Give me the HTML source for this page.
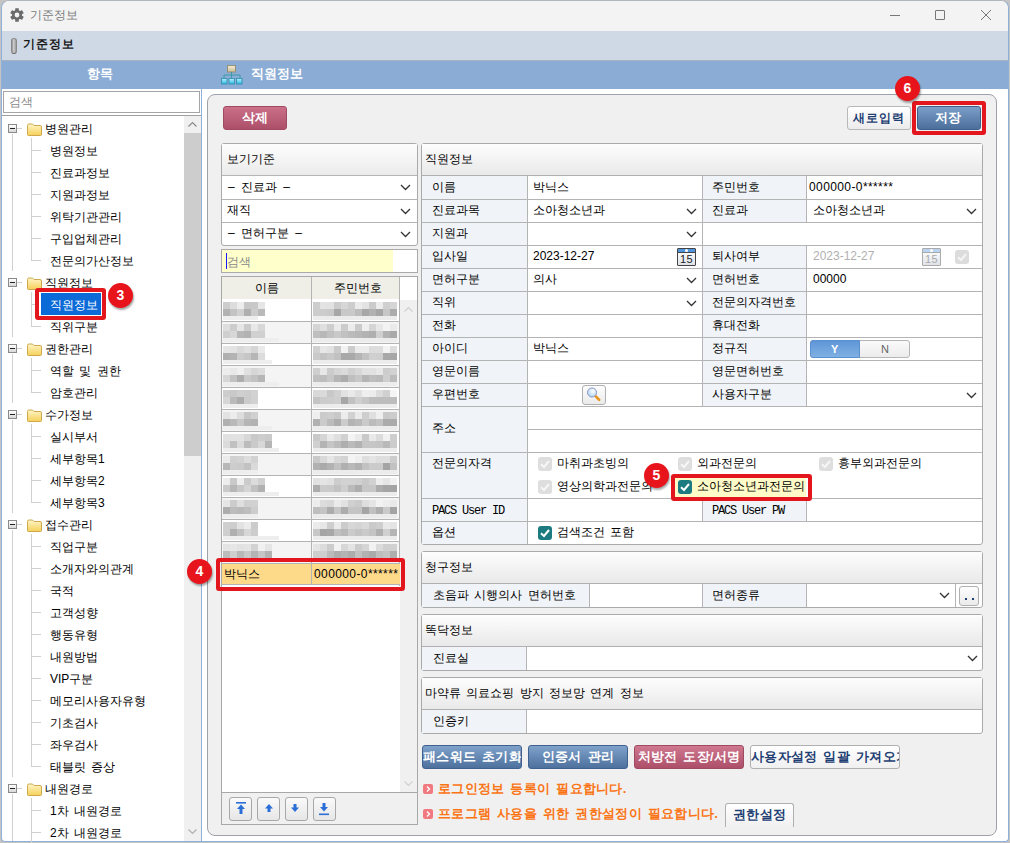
<!DOCTYPE html><html><head><meta charset="utf-8"><style>
*{box-sizing:border-box}
html,body{margin:0;padding:0;width:1010px;height:843px;overflow:hidden;background:#c4c4c4}
body{font-family:"Liberation Sans",sans-serif;font-size:12px;color:#000;position:relative;word-spacing:2px}
.t{position:absolute;white-space:nowrap}
.ab{position:absolute}
</style></head><body>
<div style="position:absolute;left:1008px;top:0px;width:2px;height:843px;background:#c4c4c4"></div>
<div style="position:absolute;left:1px;top:0px;width:1008px;height:842px;background:#fff;border:1px solid #8fb0d8;border-top-color:#b0b6be;border-radius:8px 8px 4px 4px;overflow:hidden"></div>
<div style="position:absolute;left:2px;top:1px;width:1006px;height:30px;background:#f3f3f3;border-radius:8px 8px 0 0"></div>
<svg class="ab" style="left:10px;top:8px" width="14" height="14" viewBox="0 0 14 14"><g fill="#6b6b6b"><circle cx="7" cy="7" r="5"/>
<rect x="5.2" y="0.2" width="3.6" height="13.6" rx="0.5"/><rect x="5.2" y="0.2" width="3.6" height="13.6" rx="0.5" transform="rotate(60 7 7)"/>
<rect x="5.2" y="0.2" width="3.6" height="13.6" rx="0.5" transform="rotate(120 7 7)"/></g>
<circle cx="7" cy="7" r="2.4" fill="#f3f3f3"/></svg>
<div class="t" style="left:30px;top:5px;line-height:20px;color:#7a7a7a">기준정보</div>
<div style="position:absolute;left:890px;top:15px;width:10px;height:1px;background:#777"></div>
<div style="position:absolute;left:935px;top:10px;width:10px;height:10px;border:1px solid #777;border-radius:1px"></div>
<svg class="ab" style="left:980px;top:9px" width="12" height="12" viewBox="0 0 12 12"><path d="M1 1L11 11M11 1L1 11" stroke="#777" stroke-width="1"/></svg>
<div style="position:absolute;left:2px;top:31px;width:1006px;height:30px;background:#cfd9e6;border-bottom:1px solid #a9b3bf"></div>
<div style="position:absolute;left:11px;top:38px;width:6px;height:16px;border-radius:3px;background:linear-gradient(90deg,#8a8a8a,#d0d0d0 40%,#9a9a9a);border:1px solid #8a8a8a;border-bottom-color:#666"></div>
<div class="t" style="left:23px;top:34px;line-height:20px;font-weight:bold;color:#1a1a1a;letter-spacing:1px">기준정보</div>
<div style="position:absolute;left:2px;top:61px;width:1006px;height:28px;background:#8badd5"></div>
<div class="t" style="left:87px;top:64px;line-height:20px;font-weight:bold;color:#fff;font-size:13px">항목</div>
<svg class="ab" style="left:220px;top:64px" width="25" height="22" viewBox="0 0 25 22">
<defs><linearGradient id="cy" x1="0" y1="0" x2="0" y2="1"><stop offset="0" stop-color="#b8f0ff"/><stop offset="1" stop-color="#2cb8e0"/></linearGradient>
<linearGradient id="bg1" x1="0" y1="0" x2="0" y2="1"><stop offset="0" stop-color="#f4ecd4"/><stop offset="1" stop-color="#c8bc98"/></linearGradient></defs>
<rect x="7.5" y="1.5" width="8" height="6.5" fill="url(#bg1)" stroke="#8c8468" stroke-width="0.8"/>
<path d="M11.5 8V11M4 14.5V11H20V14.5M11.5 11V14.5" stroke="#3a9aa8" fill="none" stroke-width="1"/>
<rect x="1.5" y="14.5" width="5.5" height="5.5" fill="url(#cy)" stroke="#2a8cac" stroke-width="0.8"/>
<rect x="9" y="14.5" width="5.5" height="5.5" fill="url(#cy)" stroke="#2a8cac" stroke-width="0.8"/>
<rect x="16.5" y="14.5" width="5.5" height="5.5" fill="url(#cy)" stroke="#2a8cac" stroke-width="0.8"/></svg>
<div class="t" style="left:251px;top:64px;line-height:20px;font-weight:bold;color:#fff;font-size:13px">직원정보</div>
<div style="position:absolute;left:201px;top:89px;width:1px;height:752px;background:#8fb0d8"></div>
<div style="position:absolute;left:3px;top:91px;width:197px;height:22px;border:1px solid #a5a5a5;background:#fff"></div>
<div class="t" style="left:9px;top:92px;line-height:20px;color:#888">검색</div>
<div style="position:absolute;left:2px;top:115px;width:199px;height:1px;background:#a0a0a0"></div>
<div style="position:absolute;left:184px;top:116px;width:17px;height:725px;background:#f0f0f0"></div>
<div style="position:absolute;left:184px;top:133px;width:17px;height:323px;background:#cdcdcd"></div>
<svg class="ab" style="left:187px;top:120px" width="11" height="8" viewBox="0 0 11 8"><path d="M1.5 6.5L5.5 2.5L9.5 6.5" stroke="#8a8a8a" fill="none" stroke-width="1.2"/></svg>
<svg class="ab" style="left:187px;top:828px" width="11" height="8" viewBox="0 0 11 8"><path d="M1.5 1.5L5.5 5.5L9.5 1.5" stroke="#b0b0b0" fill="none" stroke-width="1.2"/></svg>
<div style="position:absolute;left:12px;top:134px;width:1px;height:137px;background:#d0d0d0"></div>
<div style="position:absolute;left:12px;top:288px;width:1px;height:49px;background:#d0d0d0"></div>
<div style="position:absolute;left:12px;top:354px;width:1px;height:49px;background:#d0d0d0"></div>
<div style="position:absolute;left:12px;top:420px;width:1px;height:93px;background:#d0d0d0"></div>
<div style="position:absolute;left:12px;top:530px;width:1px;height:247px;background:#d0d0d0"></div>
<div style="position:absolute;left:12px;top:794px;width:1px;height:47px;background:#d0d0d0"></div>
<div style="position:absolute;left:8px;top:124px;width:9px;height:9px;border:1px solid #8a8a8a;background:linear-gradient(#fff,#d8d8d8)"></div>
<div style="position:absolute;left:10px;top:128px;width:5px;height:1px;background:#222"></div>
<div style="position:absolute;left:17px;top:128px;width:5px;height:1px;background:#d0d0d0"></div>
<svg class="ab" style="left:27px;top:123px" width="15" height="13" viewBox="0 0 15 13"><defs><linearGradient id="fg0" x1="0" y1="0" x2="0" y2="1"><stop offset="0" stop-color="#fff6c8"/><stop offset="1" stop-color="#f5cf58"/></linearGradient></defs><path d="M0.5 2.5Q0.5 1 2 1H5.5L7 2.5H13Q14.5 2.5 14.5 4V11.5Q14.5 12.5 13.5 12.5H1.5Q0.5 12.5 0.5 11.5Z" fill="url(#fg0)" stroke="#c8a040" stroke-width="0.9"/></svg>
<div class="t" style="left:45px;top:119px;line-height:20px;">병원관리</div>
<div style="position:absolute;left:31px;top:150px;width:10px;height:1px;background:#d0d0d0"></div>
<div class="t" style="left:50px;top:141px;line-height:20px;">병원정보</div>
<div style="position:absolute;left:31px;top:172px;width:10px;height:1px;background:#d0d0d0"></div>
<div class="t" style="left:50px;top:163px;line-height:20px;">진료과정보</div>
<div style="position:absolute;left:31px;top:194px;width:10px;height:1px;background:#d0d0d0"></div>
<div class="t" style="left:50px;top:185px;line-height:20px;">지원과정보</div>
<div style="position:absolute;left:31px;top:216px;width:10px;height:1px;background:#d0d0d0"></div>
<div class="t" style="left:50px;top:207px;line-height:20px;">위탁기관관리</div>
<div style="position:absolute;left:31px;top:238px;width:10px;height:1px;background:#d0d0d0"></div>
<div class="t" style="left:50px;top:229px;line-height:20px;">구입업체관리</div>
<div style="position:absolute;left:31px;top:260px;width:10px;height:1px;background:#d0d0d0"></div>
<div class="t" style="left:50px;top:251px;line-height:20px;">전문의가산정보</div>
<div style="position:absolute;left:8px;top:278px;width:9px;height:9px;border:1px solid #8a8a8a;background:linear-gradient(#fff,#d8d8d8)"></div>
<div style="position:absolute;left:10px;top:282px;width:5px;height:1px;background:#222"></div>
<div style="position:absolute;left:17px;top:282px;width:5px;height:1px;background:#d0d0d0"></div>
<svg class="ab" style="left:27px;top:277px" width="15" height="13" viewBox="0 0 15 13"><defs><linearGradient id="fg7" x1="0" y1="0" x2="0" y2="1"><stop offset="0" stop-color="#fff6c8"/><stop offset="1" stop-color="#f5cf58"/></linearGradient></defs><path d="M0.5 2.5Q0.5 1 2 1H5.5L7 2.5H13Q14.5 2.5 14.5 4V11.5Q14.5 12.5 13.5 12.5H1.5Q0.5 12.5 0.5 11.5Z" fill="url(#fg7)" stroke="#c8a040" stroke-width="0.9"/></svg>
<div class="t" style="left:45px;top:273px;line-height:20px;">직원정보</div>
<div style="position:absolute;left:31px;top:304px;width:10px;height:1px;background:#d0d0d0"></div>
<div style="position:absolute;left:35px;top:288px;width:71px;height:32px;border:4px solid #e3161d;border-radius:3px;background:#fff"></div>
<div style="position:absolute;left:41px;top:293px;width:60px;height:22px;background:#0a6ad8"></div>
<div class="t" style="left:50px;top:295px;line-height:20px;color:#fff">직원정보</div>
<div style="position:absolute;left:31px;top:326px;width:10px;height:1px;background:#d0d0d0"></div>
<div class="t" style="left:50px;top:317px;line-height:20px;">직위구분</div>
<div style="position:absolute;left:8px;top:344px;width:9px;height:9px;border:1px solid #8a8a8a;background:linear-gradient(#fff,#d8d8d8)"></div>
<div style="position:absolute;left:10px;top:348px;width:5px;height:1px;background:#222"></div>
<div style="position:absolute;left:17px;top:348px;width:5px;height:1px;background:#d0d0d0"></div>
<svg class="ab" style="left:27px;top:343px" width="15" height="13" viewBox="0 0 15 13"><defs><linearGradient id="fg10" x1="0" y1="0" x2="0" y2="1"><stop offset="0" stop-color="#fff6c8"/><stop offset="1" stop-color="#f5cf58"/></linearGradient></defs><path d="M0.5 2.5Q0.5 1 2 1H5.5L7 2.5H13Q14.5 2.5 14.5 4V11.5Q14.5 12.5 13.5 12.5H1.5Q0.5 12.5 0.5 11.5Z" fill="url(#fg10)" stroke="#c8a040" stroke-width="0.9"/></svg>
<div class="t" style="left:45px;top:339px;line-height:20px;">권한관리</div>
<div style="position:absolute;left:31px;top:370px;width:10px;height:1px;background:#d0d0d0"></div>
<div class="t" style="left:50px;top:361px;line-height:20px;">역할 및 권한</div>
<div style="position:absolute;left:31px;top:392px;width:10px;height:1px;background:#d0d0d0"></div>
<div class="t" style="left:50px;top:383px;line-height:20px;">암호관리</div>
<div style="position:absolute;left:8px;top:410px;width:9px;height:9px;border:1px solid #8a8a8a;background:linear-gradient(#fff,#d8d8d8)"></div>
<div style="position:absolute;left:10px;top:414px;width:5px;height:1px;background:#222"></div>
<div style="position:absolute;left:17px;top:414px;width:5px;height:1px;background:#d0d0d0"></div>
<svg class="ab" style="left:27px;top:409px" width="15" height="13" viewBox="0 0 15 13"><defs><linearGradient id="fg13" x1="0" y1="0" x2="0" y2="1"><stop offset="0" stop-color="#fff6c8"/><stop offset="1" stop-color="#f5cf58"/></linearGradient></defs><path d="M0.5 2.5Q0.5 1 2 1H5.5L7 2.5H13Q14.5 2.5 14.5 4V11.5Q14.5 12.5 13.5 12.5H1.5Q0.5 12.5 0.5 11.5Z" fill="url(#fg13)" stroke="#c8a040" stroke-width="0.9"/></svg>
<div class="t" style="left:45px;top:405px;line-height:20px;">수가정보</div>
<div style="position:absolute;left:31px;top:436px;width:10px;height:1px;background:#d0d0d0"></div>
<div class="t" style="left:50px;top:427px;line-height:20px;">실시부서</div>
<div style="position:absolute;left:31px;top:458px;width:10px;height:1px;background:#d0d0d0"></div>
<div class="t" style="left:50px;top:449px;line-height:20px;">세부항목1</div>
<div style="position:absolute;left:31px;top:480px;width:10px;height:1px;background:#d0d0d0"></div>
<div class="t" style="left:50px;top:471px;line-height:20px;">세부항목2</div>
<div style="position:absolute;left:31px;top:502px;width:10px;height:1px;background:#d0d0d0"></div>
<div class="t" style="left:50px;top:493px;line-height:20px;">세부항목3</div>
<div style="position:absolute;left:8px;top:520px;width:9px;height:9px;border:1px solid #8a8a8a;background:linear-gradient(#fff,#d8d8d8)"></div>
<div style="position:absolute;left:10px;top:524px;width:5px;height:1px;background:#222"></div>
<div style="position:absolute;left:17px;top:524px;width:5px;height:1px;background:#d0d0d0"></div>
<svg class="ab" style="left:27px;top:519px" width="15" height="13" viewBox="0 0 15 13"><defs><linearGradient id="fg18" x1="0" y1="0" x2="0" y2="1"><stop offset="0" stop-color="#fff6c8"/><stop offset="1" stop-color="#f5cf58"/></linearGradient></defs><path d="M0.5 2.5Q0.5 1 2 1H5.5L7 2.5H13Q14.5 2.5 14.5 4V11.5Q14.5 12.5 13.5 12.5H1.5Q0.5 12.5 0.5 11.5Z" fill="url(#fg18)" stroke="#c8a040" stroke-width="0.9"/></svg>
<div class="t" style="left:45px;top:515px;line-height:20px;">접수관리</div>
<div style="position:absolute;left:31px;top:546px;width:10px;height:1px;background:#d0d0d0"></div>
<div class="t" style="left:50px;top:537px;line-height:20px;">직업구분</div>
<div style="position:absolute;left:31px;top:568px;width:10px;height:1px;background:#d0d0d0"></div>
<div class="t" style="left:50px;top:559px;line-height:20px;">소개자와의관계</div>
<div style="position:absolute;left:31px;top:590px;width:10px;height:1px;background:#d0d0d0"></div>
<div class="t" style="left:50px;top:581px;line-height:20px;">국적</div>
<div style="position:absolute;left:31px;top:612px;width:10px;height:1px;background:#d0d0d0"></div>
<div class="t" style="left:50px;top:603px;line-height:20px;">고객성향</div>
<div style="position:absolute;left:31px;top:634px;width:10px;height:1px;background:#d0d0d0"></div>
<div class="t" style="left:50px;top:625px;line-height:20px;">행동유형</div>
<div style="position:absolute;left:31px;top:656px;width:10px;height:1px;background:#d0d0d0"></div>
<div class="t" style="left:50px;top:647px;line-height:20px;">내원방법</div>
<div style="position:absolute;left:31px;top:678px;width:10px;height:1px;background:#d0d0d0"></div>
<div class="t" style="left:50px;top:669px;line-height:20px;">VIP구분</div>
<div style="position:absolute;left:31px;top:700px;width:10px;height:1px;background:#d0d0d0"></div>
<div class="t" style="left:50px;top:691px;line-height:20px;">메모리사용자유형</div>
<div style="position:absolute;left:31px;top:722px;width:10px;height:1px;background:#d0d0d0"></div>
<div class="t" style="left:50px;top:713px;line-height:20px;">기초검사</div>
<div style="position:absolute;left:31px;top:744px;width:10px;height:1px;background:#d0d0d0"></div>
<div class="t" style="left:50px;top:735px;line-height:20px;">좌우검사</div>
<div style="position:absolute;left:31px;top:766px;width:10px;height:1px;background:#d0d0d0"></div>
<div class="t" style="left:50px;top:757px;line-height:20px;">태블릿 증상</div>
<div style="position:absolute;left:8px;top:784px;width:9px;height:9px;border:1px solid #8a8a8a;background:linear-gradient(#fff,#d8d8d8)"></div>
<div style="position:absolute;left:10px;top:788px;width:5px;height:1px;background:#222"></div>
<div style="position:absolute;left:17px;top:788px;width:5px;height:1px;background:#d0d0d0"></div>
<svg class="ab" style="left:27px;top:783px" width="15" height="13" viewBox="0 0 15 13"><defs><linearGradient id="fg30" x1="0" y1="0" x2="0" y2="1"><stop offset="0" stop-color="#fff6c8"/><stop offset="1" stop-color="#f5cf58"/></linearGradient></defs><path d="M0.5 2.5Q0.5 1 2 1H5.5L7 2.5H13Q14.5 2.5 14.5 4V11.5Q14.5 12.5 13.5 12.5H1.5Q0.5 12.5 0.5 11.5Z" fill="url(#fg30)" stroke="#c8a040" stroke-width="0.9"/></svg>
<div class="t" style="left:45px;top:779px;line-height:20px;">내원경로</div>
<div style="position:absolute;left:31px;top:810px;width:10px;height:1px;background:#d0d0d0"></div>
<div class="t" style="left:50px;top:801px;line-height:20px;">1차 내원경로</div>
<div style="position:absolute;left:31px;top:832px;width:10px;height:1px;background:#d0d0d0"></div>
<div class="t" style="left:50px;top:823px;line-height:20px;">2차 내원경로</div>
<div style="position:absolute;left:31px;top:138px;width:1px;height:123px;background:#d0d0d0"></div>
<div style="position:absolute;left:31px;top:292px;width:1px;height:35px;background:#d0d0d0"></div>
<div style="position:absolute;left:31px;top:358px;width:1px;height:35px;background:#d0d0d0"></div>
<div style="position:absolute;left:31px;top:424px;width:1px;height:79px;background:#d0d0d0"></div>
<div style="position:absolute;left:31px;top:534px;width:1px;height:233px;background:#d0d0d0"></div>
<div style="position:absolute;left:31px;top:798px;width:1px;height:45px;background:#d0d0d0"></div>
<div style="position:absolute;left:207px;top:94px;width:790px;height:742px;background:#f0f0f0;border:1px solid #9fa1a8;border-radius:8px"></div>
<div style="position:absolute;left:223px;top:106px;width:64px;height:24px;border-radius:3px;border:1px solid #a04a62;background:linear-gradient(#cb7088,#ad4f69)"></div>
<div class="t" style="left:242px;top:108px;line-height:20px;font-weight:bold;color:#fff;font-size:13px">삭제</div>
<div style="position:absolute;left:847px;top:106px;width:64px;height:24px;border-radius:3px;border:1px solid #b8b8b8;background:linear-gradient(#ffffff,#ececec)"></div>
<div class="t" style="left:853px;top:108px;line-height:20px;font-weight:bold;color:#1e3f73;letter-spacing:0.9px">새로입력</div>
<div style="position:absolute;left:912px;top:101px;width:74px;height:34px;border:4px solid #e3161d;border-radius:3px"></div>
<div style="position:absolute;left:917px;top:106px;width:64px;height:24px;border-radius:3px;border:1px solid #3d5f8a;background:linear-gradient(#7b9fc8,#4b6e9b)"></div>
<div class="t" style="left:935px;top:108px;line-height:20px;font-weight:bold;color:#fff;font-size:13px">저장</div>
<div style="position:absolute;left:221px;top:143px;width:197px;height:103px;border:1px solid #aaa;border-radius:3px;background:#fff;overflow:hidden"></div>
<div style="position:absolute;left:222px;top:144px;width:195px;height:32px;background:linear-gradient(#fdfdfd,#ebebeb);border-bottom:1px solid #b4b4b4"></div>
<div class="t" style="left:227px;top:149px;line-height:20px;">보기기준</div>
<div class="t" style="left:228px;top:177px;line-height:20px;word-spacing:3px">– 진료과 –</div>
<svg class="ab" style="left:400px;top:184px" width="11" height="7" viewBox="0 0 11 7"><path d="M1 1L5.5 5.5L10 1" stroke="#333" fill="none" stroke-width="1.3"/></svg>
<div style="position:absolute;left:222px;top:199px;width:195px;height:1px;background:#b4b4b4"></div>
<div class="t" style="left:227px;top:200px;line-height:20px;word-spacing:3px">재직</div>
<svg class="ab" style="left:400px;top:208px" width="11" height="7" viewBox="0 0 11 7"><path d="M1 1L5.5 5.5L10 1" stroke="#333" fill="none" stroke-width="1.3"/></svg>
<div style="position:absolute;left:222px;top:222px;width:195px;height:1px;background:#b4b4b4"></div>
<div class="t" style="left:228px;top:223px;line-height:20px;word-spacing:3px">– 면허구분 –</div>
<svg class="ab" style="left:400px;top:231px" width="11" height="7" viewBox="0 0 11 7"><path d="M1 1L5.5 5.5L10 1" stroke="#333" fill="none" stroke-width="1.3"/></svg>
<div style="position:absolute;left:221px;top:249px;width:197px;height:24px;border:1px solid #aaa;background:#fff"></div>
<div style="position:absolute;left:222px;top:250px;width:171px;height:22px;background:#ffffcc"></div>
<div style="position:absolute;left:226px;top:253px;width:1px;height:16px;background:#1a1aff"></div>
<div class="t" style="left:227px;top:252px;line-height:20px;color:#888">검색</div>
<div style="position:absolute;left:221px;top:276px;width:197px;height:549px;border:1px solid #a8a8a8;background:#fff"></div>
<div style="position:absolute;left:222px;top:277px;width:178px;height:23px;background:#efefe8;border-bottom:1px solid #b4b4b4"></div>
<div style="position:absolute;left:311px;top:277px;width:1px;height:308px;background:#b4b4b4"></div>
<div class="t" style="left:255px;top:278px;line-height:20px;">이름</div>
<div class="t" style="left:334px;top:278px;line-height:20px;">주민번호</div>
<div style="position:absolute;left:400px;top:300px;width:17px;height:492px;background:#f0f0f0"></div>
<svg class="ab" style="left:403px;top:305px" width="11" height="8" viewBox="0 0 11 8"><path d="M1.5 6.5L5.5 2.5L9.5 6.5" stroke="#d0d0d0" fill="none" stroke-width="1.2"/></svg>
<svg class="ab" style="left:403px;top:780px" width="11" height="8" viewBox="0 0 11 8"><path d="M1.5 1.5L5.5 5.5L9.5 1.5" stroke="#d0d0d0" fill="none" stroke-width="1.2"/></svg>
<svg class="ab" style="left:222px;top:276px" width="178" height="290"><rect x="0" y="23" width="178" height="22" fill="#ffffff"/><rect x="1" y="26" width="7" height="7" fill="#cdcdcd"/><rect x="8" y="26" width="7" height="7" fill="#dddddd"/><rect x="15" y="26" width="7" height="7" fill="#ededed"/><rect x="22" y="26" width="7" height="7" fill="#c7c7c7"/><rect x="29" y="26" width="7" height="7" fill="#c8c8c8"/><rect x="36" y="26" width="7" height="7" fill="#e6e6e6"/><rect x="1" y="33" width="7" height="7" fill="#b2b2b2"/><rect x="8" y="33" width="7" height="7" fill="#c3c3c3"/><rect x="15" y="33" width="7" height="7" fill="#d1d1d1"/><rect x="22" y="33" width="7" height="7" fill="#afafaf"/><rect x="29" y="33" width="7" height="7" fill="#cccccc"/><rect x="36" y="33" width="7" height="7" fill="#b9b9b9"/><rect x="1" y="40" width="35" height="4" fill="#eeeeee"/><rect x="91" y="26" width="7" height="7" fill="#cdcdcd"/><rect x="98" y="26" width="7" height="7" fill="#e3e3e3"/><rect x="105" y="26" width="7" height="7" fill="#e2e2e2"/><rect x="112" y="26" width="7" height="7" fill="#cccccc"/><rect x="119" y="26" width="7" height="7" fill="#d7d7d7"/><rect x="126" y="26" width="7" height="7" fill="#cdcdcd"/><rect x="133" y="26" width="7" height="7" fill="#ebebeb"/><rect x="140" y="26" width="7" height="7" fill="#e3e3e3"/><rect x="147" y="26" width="7" height="7" fill="#cbcbcb"/><rect x="154" y="26" width="7" height="7" fill="#ececec"/><rect x="161" y="26" width="7" height="7" fill="#cfcfcf"/><rect x="168" y="26" width="7" height="7" fill="#d6d6d6"/><rect x="91" y="33" width="7" height="7" fill="#cccccc"/><rect x="98" y="33" width="7" height="7" fill="#cccccc"/><rect x="105" y="33" width="7" height="7" fill="#c9c9c9"/><rect x="112" y="33" width="7" height="7" fill="#a7a7a7"/><rect x="119" y="33" width="7" height="7" fill="#c8c8c8"/><rect x="126" y="33" width="7" height="7" fill="#c9c9c9"/><rect x="133" y="33" width="7" height="7" fill="#bdbdbd"/><rect x="140" y="33" width="7" height="7" fill="#a7a7a7"/><rect x="147" y="33" width="7" height="7" fill="#b2b2b2"/><rect x="154" y="33" width="7" height="7" fill="#a6a6a6"/><rect x="161" y="33" width="7" height="7" fill="#c7c7c7"/><rect x="168" y="33" width="7" height="7" fill="#acacac"/><rect x="91" y="40" width="84" height="4" fill="#ececec"/><rect x="0" y="45" width="178" height="22" fill="#f4f4f4"/><rect x="1" y="48" width="7" height="7" fill="#dedede"/><rect x="8" y="48" width="7" height="7" fill="#cdcdcd"/><rect x="15" y="48" width="7" height="7" fill="#e6e6e6"/><rect x="22" y="48" width="7" height="7" fill="#cbcbcb"/><rect x="29" y="48" width="7" height="7" fill="#e8e8e8"/><rect x="36" y="48" width="7" height="7" fill="#d7d7d7"/><rect x="1" y="55" width="7" height="7" fill="#cfcfcf"/><rect x="8" y="55" width="7" height="7" fill="#d7d7d7"/><rect x="15" y="55" width="7" height="7" fill="#b7b7b7"/><rect x="22" y="55" width="7" height="7" fill="#b2b2b2"/><rect x="29" y="55" width="7" height="7" fill="#d1d1d1"/><rect x="36" y="55" width="7" height="7" fill="#d0d0d0"/><rect x="1" y="62" width="56" height="4" fill="#eeeeee"/><rect x="91" y="48" width="7" height="7" fill="#d4d4d4"/><rect x="98" y="48" width="7" height="7" fill="#dfdfdf"/><rect x="105" y="48" width="7" height="7" fill="#cecece"/><rect x="112" y="48" width="7" height="7" fill="#ebebeb"/><rect x="119" y="48" width="7" height="7" fill="#cccccc"/><rect x="126" y="48" width="7" height="7" fill="#ececec"/><rect x="133" y="48" width="7" height="7" fill="#cbcbcb"/><rect x="140" y="48" width="7" height="7" fill="#efefef"/><rect x="147" y="48" width="7" height="7" fill="#d5d5d5"/><rect x="154" y="48" width="7" height="7" fill="#e7e7e7"/><rect x="161" y="48" width="7" height="7" fill="#f3f3f3"/><rect x="168" y="48" width="7" height="7" fill="#eaeaea"/><rect x="91" y="55" width="7" height="7" fill="#bfbfbf"/><rect x="98" y="55" width="7" height="7" fill="#b8b8b8"/><rect x="105" y="55" width="7" height="7" fill="#c1c1c1"/><rect x="112" y="55" width="7" height="7" fill="#c9c9c9"/><rect x="119" y="55" width="7" height="7" fill="#c1c1c1"/><rect x="126" y="55" width="7" height="7" fill="#bbbbbb"/><rect x="133" y="55" width="7" height="7" fill="#b7b7b7"/><rect x="140" y="55" width="7" height="7" fill="#b3b3b3"/><rect x="147" y="55" width="7" height="7" fill="#afafaf"/><rect x="154" y="55" width="7" height="7" fill="#d0d0d0"/><rect x="161" y="55" width="7" height="7" fill="#b3b3b3"/><rect x="168" y="55" width="7" height="7" fill="#a9a9a9"/><rect x="91" y="62" width="84" height="4" fill="#ececec"/><rect x="0" y="67" width="178" height="22" fill="#ffffff"/><rect x="1" y="70" width="7" height="7" fill="#e5e5e5"/><rect x="8" y="70" width="7" height="7" fill="#e3e3e3"/><rect x="15" y="70" width="7" height="7" fill="#d9d9d9"/><rect x="22" y="70" width="7" height="7" fill="#e0e0e0"/><rect x="29" y="70" width="7" height="7" fill="#d6d6d6"/><rect x="36" y="70" width="7" height="7" fill="#eaeaea"/><rect x="1" y="77" width="7" height="7" fill="#b0b0b0"/><rect x="8" y="77" width="7" height="7" fill="#b3b3b3"/><rect x="15" y="77" width="7" height="7" fill="#cccccc"/><rect x="22" y="77" width="7" height="7" fill="#c6c6c6"/><rect x="29" y="77" width="7" height="7" fill="#b6b6b6"/><rect x="36" y="77" width="7" height="7" fill="#dcdcdc"/><rect x="1" y="84" width="49" height="4" fill="#eeeeee"/><rect x="91" y="70" width="7" height="7" fill="#d1d1d1"/><rect x="98" y="70" width="7" height="7" fill="#e7e7e7"/><rect x="105" y="70" width="7" height="7" fill="#e2e2e2"/><rect x="112" y="70" width="7" height="7" fill="#cacaca"/><rect x="119" y="70" width="7" height="7" fill="#f2f2f2"/><rect x="126" y="70" width="7" height="7" fill="#cccccc"/><rect x="133" y="70" width="7" height="7" fill="#ebebeb"/><rect x="140" y="70" width="7" height="7" fill="#ececec"/><rect x="147" y="70" width="7" height="7" fill="#dcdcdc"/><rect x="154" y="70" width="7" height="7" fill="#dddddd"/><rect x="161" y="70" width="7" height="7" fill="#f4f4f4"/><rect x="168" y="70" width="7" height="7" fill="#dedede"/><rect x="91" y="77" width="7" height="7" fill="#cacaca"/><rect x="98" y="77" width="7" height="7" fill="#c3c3c3"/><rect x="105" y="77" width="7" height="7" fill="#c9c9c9"/><rect x="112" y="77" width="7" height="7" fill="#c1c1c1"/><rect x="119" y="77" width="7" height="7" fill="#a8a8a8"/><rect x="126" y="77" width="7" height="7" fill="#a9a9a9"/><rect x="133" y="77" width="7" height="7" fill="#b5b5b5"/><rect x="140" y="77" width="7" height="7" fill="#c2c2c2"/><rect x="147" y="77" width="7" height="7" fill="#d0d0d0"/><rect x="154" y="77" width="7" height="7" fill="#cecece"/><rect x="161" y="77" width="7" height="7" fill="#a8a8a8"/><rect x="168" y="77" width="7" height="7" fill="#a7a7a7"/><rect x="91" y="84" width="84" height="4" fill="#ececec"/><rect x="0" y="89" width="178" height="22" fill="#f4f4f4"/><rect x="1" y="92" width="7" height="7" fill="#ededed"/><rect x="8" y="92" width="7" height="7" fill="#e8e8e8"/><rect x="15" y="92" width="7" height="7" fill="#efefef"/><rect x="22" y="92" width="7" height="7" fill="#e0e0e0"/><rect x="29" y="92" width="7" height="7" fill="#d6d6d6"/><rect x="36" y="92" width="7" height="7" fill="#dcdcdc"/><rect x="1" y="99" width="7" height="7" fill="#d6d6d6"/><rect x="8" y="99" width="7" height="7" fill="#c2c2c2"/><rect x="15" y="99" width="7" height="7" fill="#adadad"/><rect x="22" y="99" width="7" height="7" fill="#c9c9c9"/><rect x="29" y="99" width="7" height="7" fill="#c2c2c2"/><rect x="36" y="99" width="7" height="7" fill="#b6b6b6"/><rect x="1" y="106" width="56" height="4" fill="#eeeeee"/><rect x="91" y="92" width="7" height="7" fill="#cfcfcf"/><rect x="98" y="92" width="7" height="7" fill="#e7e7e7"/><rect x="105" y="92" width="7" height="7" fill="#cbcbcb"/><rect x="112" y="92" width="7" height="7" fill="#d5d5d5"/><rect x="119" y="92" width="7" height="7" fill="#dadada"/><rect x="126" y="92" width="7" height="7" fill="#d0d0d0"/><rect x="133" y="92" width="7" height="7" fill="#d7d7d7"/><rect x="140" y="92" width="7" height="7" fill="#e1e1e1"/><rect x="147" y="92" width="7" height="7" fill="#e1e1e1"/><rect x="154" y="92" width="7" height="7" fill="#e7e7e7"/><rect x="161" y="92" width="7" height="7" fill="#cdcdcd"/><rect x="168" y="92" width="7" height="7" fill="#d2d2d2"/><rect x="91" y="99" width="7" height="7" fill="#c0c0c0"/><rect x="98" y="99" width="7" height="7" fill="#bdbdbd"/><rect x="105" y="99" width="7" height="7" fill="#c7c7c7"/><rect x="112" y="99" width="7" height="7" fill="#b5b5b5"/><rect x="119" y="99" width="7" height="7" fill="#acacac"/><rect x="126" y="99" width="7" height="7" fill="#bfbfbf"/><rect x="133" y="99" width="7" height="7" fill="#c7c7c7"/><rect x="140" y="99" width="7" height="7" fill="#b5b5b5"/><rect x="147" y="99" width="7" height="7" fill="#bebebe"/><rect x="154" y="99" width="7" height="7" fill="#bababa"/><rect x="161" y="99" width="7" height="7" fill="#cfcfcf"/><rect x="168" y="99" width="7" height="7" fill="#bcbcbc"/><rect x="91" y="106" width="84" height="4" fill="#ececec"/><rect x="0" y="111" width="178" height="22" fill="#ffffff"/><rect x="1" y="114" width="7" height="7" fill="#cdcdcd"/><rect x="8" y="114" width="7" height="7" fill="#c9c9c9"/><rect x="15" y="114" width="7" height="7" fill="#cfcfcf"/><rect x="22" y="114" width="7" height="7" fill="#cdcdcd"/><rect x="29" y="114" width="7" height="7" fill="#d2d2d2"/><rect x="1" y="121" width="7" height="7" fill="#d6d6d6"/><rect x="8" y="121" width="7" height="7" fill="#bababa"/><rect x="15" y="121" width="7" height="7" fill="#acacac"/><rect x="22" y="121" width="7" height="7" fill="#cbcbcb"/><rect x="29" y="121" width="7" height="7" fill="#d1d1d1"/><rect x="1" y="128" width="35" height="4" fill="#eeeeee"/><rect x="91" y="114" width="7" height="7" fill="#d8d8d8"/><rect x="98" y="114" width="7" height="7" fill="#dadada"/><rect x="105" y="114" width="7" height="7" fill="#c8c8c8"/><rect x="112" y="114" width="7" height="7" fill="#d1d1d1"/><rect x="119" y="114" width="7" height="7" fill="#e2e2e2"/><rect x="126" y="114" width="7" height="7" fill="#eaeaea"/><rect x="133" y="114" width="7" height="7" fill="#dfdfdf"/><rect x="140" y="114" width="7" height="7" fill="#efefef"/><rect x="147" y="114" width="7" height="7" fill="#ececec"/><rect x="154" y="114" width="7" height="7" fill="#dcdcdc"/><rect x="161" y="114" width="7" height="7" fill="#d0d0d0"/><rect x="168" y="114" width="7" height="7" fill="#f4f4f4"/><rect x="91" y="121" width="7" height="7" fill="#c4c4c4"/><rect x="98" y="121" width="7" height="7" fill="#cbcbcb"/><rect x="105" y="121" width="7" height="7" fill="#cdcdcd"/><rect x="112" y="121" width="7" height="7" fill="#cfcfcf"/><rect x="119" y="121" width="7" height="7" fill="#a7a7a7"/><rect x="126" y="121" width="7" height="7" fill="#c1c1c1"/><rect x="133" y="121" width="7" height="7" fill="#cfcfcf"/><rect x="140" y="121" width="7" height="7" fill="#c7c7c7"/><rect x="147" y="121" width="7" height="7" fill="#bdbdbd"/><rect x="154" y="121" width="7" height="7" fill="#bdbdbd"/><rect x="161" y="121" width="7" height="7" fill="#bdbdbd"/><rect x="168" y="121" width="7" height="7" fill="#bdbdbd"/><rect x="91" y="128" width="84" height="4" fill="#ececec"/><rect x="0" y="133" width="178" height="22" fill="#f4f4f4"/><rect x="1" y="136" width="7" height="7" fill="#e2e2e2"/><rect x="8" y="136" width="7" height="7" fill="#ececec"/><rect x="15" y="136" width="7" height="7" fill="#dddddd"/><rect x="22" y="136" width="7" height="7" fill="#c7c7c7"/><rect x="29" y="136" width="7" height="7" fill="#d0d0d0"/><rect x="1" y="143" width="7" height="7" fill="#b0b0b0"/><rect x="8" y="143" width="7" height="7" fill="#b9b9b9"/><rect x="15" y="143" width="7" height="7" fill="#c8c8c8"/><rect x="22" y="143" width="7" height="7" fill="#b6b6b6"/><rect x="29" y="143" width="7" height="7" fill="#b3b3b3"/><rect x="1" y="150" width="49" height="4" fill="#eeeeee"/><rect x="91" y="136" width="7" height="7" fill="#eeeeee"/><rect x="98" y="136" width="7" height="7" fill="#cbcbcb"/><rect x="105" y="136" width="7" height="7" fill="#cecece"/><rect x="112" y="136" width="7" height="7" fill="#c8c8c8"/><rect x="119" y="136" width="7" height="7" fill="#ececec"/><rect x="126" y="136" width="7" height="7" fill="#d1d1d1"/><rect x="133" y="136" width="7" height="7" fill="#eaeaea"/><rect x="140" y="136" width="7" height="7" fill="#cecece"/><rect x="147" y="136" width="7" height="7" fill="#dfdfdf"/><rect x="154" y="136" width="7" height="7" fill="#efefef"/><rect x="161" y="136" width="7" height="7" fill="#c9c9c9"/><rect x="168" y="136" width="7" height="7" fill="#cccccc"/><rect x="91" y="143" width="7" height="7" fill="#b1b1b1"/><rect x="98" y="143" width="7" height="7" fill="#cbcbcb"/><rect x="105" y="143" width="7" height="7" fill="#bcbcbc"/><rect x="112" y="143" width="7" height="7" fill="#adadad"/><rect x="119" y="143" width="7" height="7" fill="#cccccc"/><rect x="126" y="143" width="7" height="7" fill="#b4b4b4"/><rect x="133" y="143" width="7" height="7" fill="#bababa"/><rect x="140" y="143" width="7" height="7" fill="#cacaca"/><rect x="147" y="143" width="7" height="7" fill="#bbbbbb"/><rect x="154" y="143" width="7" height="7" fill="#c2c2c2"/><rect x="161" y="143" width="7" height="7" fill="#ababab"/><rect x="168" y="143" width="7" height="7" fill="#ababab"/><rect x="91" y="150" width="84" height="4" fill="#ececec"/><rect x="0" y="155" width="178" height="22" fill="#ffffff"/><rect x="1" y="158" width="7" height="7" fill="#e1e1e1"/><rect x="8" y="158" width="7" height="7" fill="#e2e2e2"/><rect x="15" y="158" width="7" height="7" fill="#e2e2e2"/><rect x="22" y="158" width="7" height="7" fill="#d7d7d7"/><rect x="29" y="158" width="7" height="7" fill="#c9c9c9"/><rect x="36" y="158" width="7" height="7" fill="#cdcdcd"/><rect x="43" y="158" width="7" height="7" fill="#cacaca"/><rect x="1" y="165" width="7" height="7" fill="#dbdbdb"/><rect x="8" y="165" width="7" height="7" fill="#c1c1c1"/><rect x="15" y="165" width="7" height="7" fill="#dbdbdb"/><rect x="22" y="165" width="7" height="7" fill="#bcbcbc"/><rect x="29" y="165" width="7" height="7" fill="#cacaca"/><rect x="36" y="165" width="7" height="7" fill="#d8d8d8"/><rect x="43" y="165" width="7" height="7" fill="#b6b6b6"/><rect x="1" y="172" width="56" height="4" fill="#eeeeee"/><rect x="91" y="158" width="7" height="7" fill="#c9c9c9"/><rect x="98" y="158" width="7" height="7" fill="#d5d5d5"/><rect x="105" y="158" width="7" height="7" fill="#e9e9e9"/><rect x="112" y="158" width="7" height="7" fill="#dfdfdf"/><rect x="119" y="158" width="7" height="7" fill="#d1d1d1"/><rect x="126" y="158" width="7" height="7" fill="#f4f4f4"/><rect x="133" y="158" width="7" height="7" fill="#eaeaea"/><rect x="140" y="158" width="7" height="7" fill="#c9c9c9"/><rect x="147" y="158" width="7" height="7" fill="#e9e9e9"/><rect x="154" y="158" width="7" height="7" fill="#dbdbdb"/><rect x="161" y="158" width="7" height="7" fill="#f1f1f1"/><rect x="168" y="158" width="7" height="7" fill="#cdcdcd"/><rect x="91" y="165" width="7" height="7" fill="#d0d0d0"/><rect x="98" y="165" width="7" height="7" fill="#b4b4b4"/><rect x="105" y="165" width="7" height="7" fill="#c5c5c5"/><rect x="112" y="165" width="7" height="7" fill="#bbbbbb"/><rect x="119" y="165" width="7" height="7" fill="#aeaeae"/><rect x="126" y="165" width="7" height="7" fill="#bababa"/><rect x="133" y="165" width="7" height="7" fill="#b2b2b2"/><rect x="140" y="165" width="7" height="7" fill="#c6c6c6"/><rect x="147" y="165" width="7" height="7" fill="#c6c6c6"/><rect x="154" y="165" width="7" height="7" fill="#c4c4c4"/><rect x="161" y="165" width="7" height="7" fill="#b9b9b9"/><rect x="168" y="165" width="7" height="7" fill="#cccccc"/><rect x="91" y="172" width="84" height="4" fill="#ececec"/><rect x="0" y="177" width="178" height="22" fill="#f4f4f4"/><rect x="1" y="180" width="7" height="7" fill="#ebebeb"/><rect x="8" y="180" width="7" height="7" fill="#d0d0d0"/><rect x="15" y="180" width="7" height="7" fill="#d3d3d3"/><rect x="22" y="180" width="7" height="7" fill="#dddddd"/><rect x="29" y="180" width="7" height="7" fill="#d2d2d2"/><rect x="1" y="187" width="7" height="7" fill="#b8b8b8"/><rect x="8" y="187" width="7" height="7" fill="#cdcdcd"/><rect x="15" y="187" width="7" height="7" fill="#cbcbcb"/><rect x="22" y="187" width="7" height="7" fill="#c2c2c2"/><rect x="29" y="187" width="7" height="7" fill="#dadada"/><rect x="1" y="194" width="35" height="4" fill="#eeeeee"/><rect x="91" y="180" width="7" height="7" fill="#c9c9c9"/><rect x="98" y="180" width="7" height="7" fill="#d9d9d9"/><rect x="105" y="180" width="7" height="7" fill="#e6e6e6"/><rect x="112" y="180" width="7" height="7" fill="#d8d8d8"/><rect x="119" y="180" width="7" height="7" fill="#d4d4d4"/><rect x="126" y="180" width="7" height="7" fill="#f4f4f4"/><rect x="133" y="180" width="7" height="7" fill="#eeeeee"/><rect x="140" y="180" width="7" height="7" fill="#dedede"/><rect x="147" y="180" width="7" height="7" fill="#e4e4e4"/><rect x="154" y="180" width="7" height="7" fill="#dedede"/><rect x="161" y="180" width="7" height="7" fill="#dfdfdf"/><rect x="168" y="180" width="7" height="7" fill="#cdcdcd"/><rect x="91" y="187" width="7" height="7" fill="#b2b2b2"/><rect x="98" y="187" width="7" height="7" fill="#aaaaaa"/><rect x="105" y="187" width="7" height="7" fill="#b2b2b2"/><rect x="112" y="187" width="7" height="7" fill="#c2c2c2"/><rect x="119" y="187" width="7" height="7" fill="#b0b0b0"/><rect x="126" y="187" width="7" height="7" fill="#b9b9b9"/><rect x="133" y="187" width="7" height="7" fill="#b1b1b1"/><rect x="140" y="187" width="7" height="7" fill="#c2c2c2"/><rect x="147" y="187" width="7" height="7" fill="#cbcbcb"/><rect x="154" y="187" width="7" height="7" fill="#cbcbcb"/><rect x="161" y="187" width="7" height="7" fill="#a4a4a4"/><rect x="168" y="187" width="7" height="7" fill="#c2c2c2"/><rect x="91" y="194" width="84" height="4" fill="#ececec"/><rect x="0" y="199" width="178" height="22" fill="#ffffff"/><rect x="1" y="202" width="7" height="7" fill="#ededed"/><rect x="8" y="202" width="7" height="7" fill="#c9c9c9"/><rect x="15" y="202" width="7" height="7" fill="#eeeeee"/><rect x="22" y="202" width="7" height="7" fill="#cbcbcb"/><rect x="29" y="202" width="7" height="7" fill="#dcdcdc"/><rect x="36" y="202" width="7" height="7" fill="#d0d0d0"/><rect x="1" y="209" width="7" height="7" fill="#cacaca"/><rect x="8" y="209" width="7" height="7" fill="#b7b7b7"/><rect x="15" y="209" width="7" height="7" fill="#c7c7c7"/><rect x="22" y="209" width="7" height="7" fill="#d4d4d4"/><rect x="29" y="209" width="7" height="7" fill="#c1c1c1"/><rect x="36" y="209" width="7" height="7" fill="#b1b1b1"/><rect x="1" y="216" width="56" height="4" fill="#eeeeee"/><rect x="91" y="202" width="7" height="7" fill="#e1e1e1"/><rect x="98" y="202" width="7" height="7" fill="#e5e5e5"/><rect x="105" y="202" width="7" height="7" fill="#e1e1e1"/><rect x="112" y="202" width="7" height="7" fill="#cdcdcd"/><rect x="119" y="202" width="7" height="7" fill="#d2d2d2"/><rect x="126" y="202" width="7" height="7" fill="#d2d2d2"/><rect x="133" y="202" width="7" height="7" fill="#d0d0d0"/><rect x="140" y="202" width="7" height="7" fill="#c9c9c9"/><rect x="147" y="202" width="7" height="7" fill="#d1d1d1"/><rect x="154" y="202" width="7" height="7" fill="#ededed"/><rect x="161" y="202" width="7" height="7" fill="#e5e5e5"/><rect x="168" y="202" width="7" height="7" fill="#f1f1f1"/><rect x="91" y="209" width="7" height="7" fill="#adadad"/><rect x="98" y="209" width="7" height="7" fill="#cbcbcb"/><rect x="105" y="209" width="7" height="7" fill="#cacaca"/><rect x="112" y="209" width="7" height="7" fill="#c2c2c2"/><rect x="119" y="209" width="7" height="7" fill="#cecece"/><rect x="126" y="209" width="7" height="7" fill="#bababa"/><rect x="133" y="209" width="7" height="7" fill="#adadad"/><rect x="140" y="209" width="7" height="7" fill="#c7c7c7"/><rect x="147" y="209" width="7" height="7" fill="#c7c7c7"/><rect x="154" y="209" width="7" height="7" fill="#acacac"/><rect x="161" y="209" width="7" height="7" fill="#a5a5a5"/><rect x="168" y="209" width="7" height="7" fill="#a4a4a4"/><rect x="91" y="216" width="84" height="4" fill="#ececec"/><rect x="0" y="221" width="178" height="22" fill="#f4f4f4"/><rect x="1" y="224" width="7" height="7" fill="#e5e5e5"/><rect x="8" y="224" width="7" height="7" fill="#cccccc"/><rect x="15" y="224" width="7" height="7" fill="#dfdfdf"/><rect x="22" y="224" width="7" height="7" fill="#d0d0d0"/><rect x="29" y="224" width="7" height="7" fill="#d1d1d1"/><rect x="1" y="231" width="7" height="7" fill="#adadad"/><rect x="8" y="231" width="7" height="7" fill="#bcbcbc"/><rect x="15" y="231" width="7" height="7" fill="#b9b9b9"/><rect x="22" y="231" width="7" height="7" fill="#bebebe"/><rect x="29" y="231" width="7" height="7" fill="#cccccc"/><rect x="1" y="238" width="35" height="4" fill="#eeeeee"/><rect x="91" y="224" width="7" height="7" fill="#ededed"/><rect x="98" y="224" width="7" height="7" fill="#dcdcdc"/><rect x="105" y="224" width="7" height="7" fill="#d8d8d8"/><rect x="112" y="224" width="7" height="7" fill="#eaeaea"/><rect x="119" y="224" width="7" height="7" fill="#e2e2e2"/><rect x="126" y="224" width="7" height="7" fill="#d0d0d0"/><rect x="133" y="224" width="7" height="7" fill="#cbcbcb"/><rect x="140" y="224" width="7" height="7" fill="#dedede"/><rect x="147" y="224" width="7" height="7" fill="#e5e5e5"/><rect x="154" y="224" width="7" height="7" fill="#f2f2f2"/><rect x="161" y="224" width="7" height="7" fill="#ededed"/><rect x="168" y="224" width="7" height="7" fill="#e9e9e9"/><rect x="91" y="231" width="7" height="7" fill="#bebebe"/><rect x="98" y="231" width="7" height="7" fill="#c4c4c4"/><rect x="105" y="231" width="7" height="7" fill="#acacac"/><rect x="112" y="231" width="7" height="7" fill="#c6c6c6"/><rect x="119" y="231" width="7" height="7" fill="#adadad"/><rect x="126" y="231" width="7" height="7" fill="#c5c5c5"/><rect x="133" y="231" width="7" height="7" fill="#c4c4c4"/><rect x="140" y="231" width="7" height="7" fill="#a5a5a5"/><rect x="147" y="231" width="7" height="7" fill="#c0c0c0"/><rect x="154" y="231" width="7" height="7" fill="#afafaf"/><rect x="161" y="231" width="7" height="7" fill="#cacaca"/><rect x="168" y="231" width="7" height="7" fill="#a4a4a4"/><rect x="91" y="238" width="84" height="4" fill="#ececec"/><rect x="0" y="243" width="178" height="22" fill="#ffffff"/><rect x="1" y="246" width="7" height="7" fill="#cfcfcf"/><rect x="8" y="246" width="7" height="7" fill="#cdcdcd"/><rect x="15" y="246" width="7" height="7" fill="#e2e2e2"/><rect x="22" y="246" width="7" height="7" fill="#ebebeb"/><rect x="29" y="246" width="7" height="7" fill="#cbcbcb"/><rect x="1" y="253" width="7" height="7" fill="#cfcfcf"/><rect x="8" y="253" width="7" height="7" fill="#afafaf"/><rect x="15" y="253" width="7" height="7" fill="#c0c0c0"/><rect x="22" y="253" width="7" height="7" fill="#d7d7d7"/><rect x="29" y="253" width="7" height="7" fill="#cdcdcd"/><rect x="1" y="260" width="56" height="4" fill="#eeeeee"/><rect x="91" y="246" width="7" height="7" fill="#ebebeb"/><rect x="98" y="246" width="7" height="7" fill="#e6e6e6"/><rect x="105" y="246" width="7" height="7" fill="#cecece"/><rect x="112" y="246" width="7" height="7" fill="#ebebeb"/><rect x="119" y="246" width="7" height="7" fill="#cbcbcb"/><rect x="126" y="246" width="7" height="7" fill="#d7d7d7"/><rect x="133" y="246" width="7" height="7" fill="#d4d4d4"/><rect x="140" y="246" width="7" height="7" fill="#d9d9d9"/><rect x="147" y="246" width="7" height="7" fill="#cacaca"/><rect x="154" y="246" width="7" height="7" fill="#cecece"/><rect x="161" y="246" width="7" height="7" fill="#e8e8e8"/><rect x="168" y="246" width="7" height="7" fill="#e4e4e4"/><rect x="91" y="253" width="7" height="7" fill="#c7c7c7"/><rect x="98" y="253" width="7" height="7" fill="#a5a5a5"/><rect x="105" y="253" width="7" height="7" fill="#a8a8a8"/><rect x="112" y="253" width="7" height="7" fill="#c0c0c0"/><rect x="119" y="253" width="7" height="7" fill="#b8b8b8"/><rect x="126" y="253" width="7" height="7" fill="#cbcbcb"/><rect x="133" y="253" width="7" height="7" fill="#c4c4c4"/><rect x="140" y="253" width="7" height="7" fill="#cacaca"/><rect x="147" y="253" width="7" height="7" fill="#c4c4c4"/><rect x="154" y="253" width="7" height="7" fill="#b0b0b0"/><rect x="161" y="253" width="7" height="7" fill="#d0d0d0"/><rect x="168" y="253" width="7" height="7" fill="#b5b5b5"/><rect x="91" y="260" width="84" height="4" fill="#ececec"/><rect x="0" y="265" width="178" height="22" fill="#f4f4f4"/><rect x="1" y="268" width="7" height="7" fill="#e4e4e4"/><rect x="8" y="268" width="7" height="7" fill="#e6e6e6"/><rect x="15" y="268" width="7" height="7" fill="#e2e2e2"/><rect x="22" y="268" width="7" height="7" fill="#e4e4e4"/><rect x="29" y="268" width="7" height="7" fill="#d3d3d3"/><rect x="36" y="268" width="7" height="7" fill="#f0f0f0"/><rect x="43" y="268" width="7" height="7" fill="#e5e5e5"/><rect x="1" y="275" width="7" height="7" fill="#bcbcbc"/><rect x="8" y="275" width="7" height="7" fill="#cfcfcf"/><rect x="15" y="275" width="7" height="7" fill="#b8b8b8"/><rect x="22" y="275" width="7" height="7" fill="#c8c8c8"/><rect x="29" y="275" width="7" height="7" fill="#b4b4b4"/><rect x="36" y="275" width="7" height="7" fill="#c6c6c6"/><rect x="43" y="275" width="7" height="7" fill="#b3b3b3"/><rect x="1" y="282" width="49" height="4" fill="#eeeeee"/><rect x="91" y="268" width="7" height="7" fill="#e4e4e4"/><rect x="98" y="268" width="7" height="7" fill="#dcdcdc"/><rect x="105" y="268" width="7" height="7" fill="#cccccc"/><rect x="112" y="268" width="7" height="7" fill="#f2f2f2"/><rect x="119" y="268" width="7" height="7" fill="#d7d7d7"/><rect x="126" y="268" width="7" height="7" fill="#e3e3e3"/><rect x="133" y="268" width="7" height="7" fill="#cccccc"/><rect x="140" y="268" width="7" height="7" fill="#d5d5d5"/><rect x="147" y="268" width="7" height="7" fill="#f2f2f2"/><rect x="154" y="268" width="7" height="7" fill="#dbdbdb"/><rect x="161" y="268" width="7" height="7" fill="#cfcfcf"/><rect x="168" y="268" width="7" height="7" fill="#d1d1d1"/><rect x="91" y="275" width="7" height="7" fill="#cdcdcd"/><rect x="98" y="275" width="7" height="7" fill="#cecece"/><rect x="105" y="275" width="7" height="7" fill="#bbbbbb"/><rect x="112" y="275" width="7" height="7" fill="#adadad"/><rect x="119" y="275" width="7" height="7" fill="#b4b4b4"/><rect x="126" y="275" width="7" height="7" fill="#acacac"/><rect x="133" y="275" width="7" height="7" fill="#c1c1c1"/><rect x="140" y="275" width="7" height="7" fill="#b2b2b2"/><rect x="147" y="275" width="7" height="7" fill="#aaaaaa"/><rect x="154" y="275" width="7" height="7" fill="#bdbdbd"/><rect x="161" y="275" width="7" height="7" fill="#c3c3c3"/><rect x="168" y="275" width="7" height="7" fill="#aeaeae"/><rect x="91" y="282" width="84" height="4" fill="#ececec"/><rect x="0" y="45" width="178" height="1" fill="#b4b4b4"/><rect x="0" y="67" width="178" height="1" fill="#b4b4b4"/><rect x="0" y="89" width="178" height="1" fill="#b4b4b4"/><rect x="0" y="111" width="178" height="1" fill="#b4b4b4"/><rect x="0" y="133" width="178" height="1" fill="#b4b4b4"/><rect x="0" y="155" width="178" height="1" fill="#b4b4b4"/><rect x="0" y="177" width="178" height="1" fill="#b4b4b4"/><rect x="0" y="199" width="178" height="1" fill="#b4b4b4"/><rect x="0" y="221" width="178" height="1" fill="#b4b4b4"/><rect x="0" y="243" width="178" height="1" fill="#b4b4b4"/><rect x="0" y="265" width="178" height="1" fill="#b4b4b4"/><rect x="0" y="287" width="178" height="1" fill="#b4b4b4"/><rect x="89" y="23" width="1" height="264" fill="#b4b4b4"/></svg>
<div style="position:absolute;left:399px;top:277px;width:1px;height:309px;background:#b4b4b4"></div>
<div style="position:absolute;left:222px;top:563px;width:178px;height:22px;background:#fdd98a;border-top:1px solid #b4b4b4;border-bottom:1px solid #b4b4b4"></div>
<div style="position:absolute;left:311px;top:563px;width:1px;height:22px;background:#b4b4b4"></div>
<div class="t" style="left:224px;top:564px;line-height:20px;">박닉스</div>
<div class="t" style="left:314px;top:564px;line-height:20px;letter-spacing:0.4px">000000-0******</div>
<div style="position:absolute;left:216px;top:558px;width:189px;height:33px;border:4px solid #e3161d;border-radius:3px"></div>
<div style="position:absolute;left:222px;top:792px;width:195px;height:32px;background:#f0f0f0;border-top:1px solid #a8a8a8"></div>
<div style="position:absolute;left:229px;top:797px;width:23px;height:24px;border:1px solid #a8a8a8;border-radius:3px;background:linear-gradient(#fafafa,#e6e6e6)"></div>
<div style="position:absolute;left:257px;top:797px;width:23px;height:24px;border:1px solid #a8a8a8;border-radius:3px;background:linear-gradient(#fafafa,#e6e6e6)"></div>
<div style="position:absolute;left:285px;top:797px;width:23px;height:24px;border:1px solid #a8a8a8;border-radius:3px;background:linear-gradient(#fafafa,#e6e6e6)"></div>
<div style="position:absolute;left:313px;top:797px;width:23px;height:24px;border:1px solid #a8a8a8;border-radius:3px;background:linear-gradient(#fafafa,#e6e6e6)"></div>
<svg class="ab" style="left:229px;top:797px" width="110" height="24" viewBox="0 0 110 24" fill="#2a6fd8">
<rect x="7" y="5" width="10" height="1.6"/><path d="M12 7.5L16 12H13.5V17H10.5V12H8Z"/>
<path d="M40 7L44 11.5H41.5V15H38.5V11.5H36Z"/>
<path d="M66 15L70 10.5H67.5V7H64.5V10.5H62Z"/>
<path d="M95 14.5L99 10H96.5V6H93.5V10H91Z"/><rect x="90" y="16.5" width="10" height="1.6"/></svg>
<div class="ab" style="left:108px;top:283px;width:25px;height:25px;border-radius:50%;background:#e8141c;box-shadow:1px 2px 2px rgba(0,0,0,0.35);color:#fff;font-weight:bold;font-size:14px;line-height:25px;text-align:center">3</div>
<div class="ab" style="left:187px;top:559px;width:25px;height:25px;border-radius:50%;background:#e8141c;box-shadow:1px 2px 2px rgba(0,0,0,0.35);color:#fff;font-weight:bold;font-size:14px;line-height:25px;text-align:center">4</div>
<div style="position:absolute;left:421px;top:143px;width:562px;height:402px;border:1px solid #aaa;border-radius:3px;background:#fff;overflow:hidden"></div>
<div style="position:absolute;left:422px;top:144px;width:560px;height:32px;background:linear-gradient(#fdfdfd,#e9e9e9);border-bottom:1px solid #b0b0b0"></div>
<div class="t" style="left:425px;top:149px;line-height:20px;">직원정보</div>
<div style="position:absolute;left:422px;top:176px;width:105px;height:368px;background:#f0f4f8"></div>
<div style="position:absolute;left:703px;top:176px;width:103px;height:23px;background:#f0f4f8"></div>
<div style="position:absolute;left:703px;top:200px;width:103px;height:22px;background:#f0f4f8"></div>
<div style="position:absolute;left:703px;top:246px;width:103px;height:22px;background:#f0f4f8"></div>
<div style="position:absolute;left:703px;top:269px;width:103px;height:22px;background:#f0f4f8"></div>
<div style="position:absolute;left:703px;top:292px;width:103px;height:22px;background:#f0f4f8"></div>
<div style="position:absolute;left:703px;top:315px;width:103px;height:22px;background:#f0f4f8"></div>
<div style="position:absolute;left:703px;top:338px;width:103px;height:22px;background:#f0f4f8"></div>
<div style="position:absolute;left:703px;top:361px;width:103px;height:22px;background:#f0f4f8"></div>
<div style="position:absolute;left:703px;top:384px;width:103px;height:22px;background:#f0f4f8"></div>
<div style="position:absolute;left:703px;top:499px;width:103px;height:22px;background:#f0f4f8"></div>
<div style="position:absolute;left:422px;top:199px;width:560px;height:1px;background:#b4b4b4"></div>
<div style="position:absolute;left:422px;top:222px;width:560px;height:1px;background:#b4b4b4"></div>
<div style="position:absolute;left:422px;top:245px;width:560px;height:1px;background:#b4b4b4"></div>
<div style="position:absolute;left:422px;top:268px;width:560px;height:1px;background:#b4b4b4"></div>
<div style="position:absolute;left:422px;top:291px;width:560px;height:1px;background:#b4b4b4"></div>
<div style="position:absolute;left:422px;top:314px;width:560px;height:1px;background:#b4b4b4"></div>
<div style="position:absolute;left:422px;top:337px;width:560px;height:1px;background:#b4b4b4"></div>
<div style="position:absolute;left:422px;top:360px;width:560px;height:1px;background:#b4b4b4"></div>
<div style="position:absolute;left:422px;top:383px;width:560px;height:1px;background:#b4b4b4"></div>
<div style="position:absolute;left:422px;top:406px;width:560px;height:1px;background:#b4b4b4"></div>
<div style="position:absolute;left:422px;top:452px;width:560px;height:1px;background:#b4b4b4"></div>
<div style="position:absolute;left:422px;top:498px;width:560px;height:1px;background:#b4b4b4"></div>
<div style="position:absolute;left:422px;top:521px;width:560px;height:1px;background:#b4b4b4"></div>
<div style="position:absolute;left:527px;top:429px;width:455px;height:1px;background:#b4b4b4"></div>
<div style="position:absolute;left:527px;top:176px;width:1px;height:368px;background:#b4b4b4"></div>
<div style="position:absolute;left:702px;top:176px;width:1px;height:23px;background:#b4b4b4"></div>
<div style="position:absolute;left:806px;top:176px;width:1px;height:23px;background:#b4b4b4"></div>
<div style="position:absolute;left:702px;top:200px;width:1px;height:22px;background:#b4b4b4"></div>
<div style="position:absolute;left:806px;top:200px;width:1px;height:22px;background:#b4b4b4"></div>
<div style="position:absolute;left:702px;top:223px;width:1px;height:22px;background:#b4b4b4"></div>
<div style="position:absolute;left:702px;top:246px;width:1px;height:22px;background:#b4b4b4"></div>
<div style="position:absolute;left:806px;top:246px;width:1px;height:22px;background:#b4b4b4"></div>
<div style="position:absolute;left:702px;top:269px;width:1px;height:22px;background:#b4b4b4"></div>
<div style="position:absolute;left:806px;top:269px;width:1px;height:22px;background:#b4b4b4"></div>
<div style="position:absolute;left:702px;top:292px;width:1px;height:22px;background:#b4b4b4"></div>
<div style="position:absolute;left:806px;top:292px;width:1px;height:22px;background:#b4b4b4"></div>
<div style="position:absolute;left:702px;top:315px;width:1px;height:22px;background:#b4b4b4"></div>
<div style="position:absolute;left:806px;top:315px;width:1px;height:22px;background:#b4b4b4"></div>
<div style="position:absolute;left:702px;top:338px;width:1px;height:22px;background:#b4b4b4"></div>
<div style="position:absolute;left:806px;top:338px;width:1px;height:22px;background:#b4b4b4"></div>
<div style="position:absolute;left:702px;top:361px;width:1px;height:22px;background:#b4b4b4"></div>
<div style="position:absolute;left:806px;top:361px;width:1px;height:22px;background:#b4b4b4"></div>
<div style="position:absolute;left:702px;top:384px;width:1px;height:22px;background:#b4b4b4"></div>
<div style="position:absolute;left:806px;top:384px;width:1px;height:22px;background:#b4b4b4"></div>
<div style="position:absolute;left:702px;top:499px;width:1px;height:22px;background:#b4b4b4"></div>
<div style="position:absolute;left:806px;top:499px;width:1px;height:22px;background:#b4b4b4"></div>
<div class="t" style="left:432px;top:177px;line-height:20px;">이름</div>
<div class="t" style="left:712px;top:177px;line-height:20px;">주민번호</div>
<div class="t" style="left:432px;top:200px;line-height:20px;">진료과목</div>
<div class="t" style="left:712px;top:200px;line-height:20px;">진료과</div>
<div class="t" style="left:432px;top:223px;line-height:20px;">지원과</div>
<div class="t" style="left:432px;top:246px;line-height:20px;">입사일</div>
<div class="t" style="left:712px;top:246px;line-height:20px;">퇴사여부</div>
<div class="t" style="left:432px;top:269px;line-height:20px;">면허구분</div>
<div class="t" style="left:712px;top:269px;line-height:20px;">면허번호</div>
<div class="t" style="left:432px;top:292px;line-height:20px;">직위</div>
<div class="t" style="left:712px;top:292px;line-height:20px;">전문의자격번호</div>
<div class="t" style="left:432px;top:315px;line-height:20px;">전화</div>
<div class="t" style="left:712px;top:315px;line-height:20px;">휴대전화</div>
<div class="t" style="left:432px;top:338px;line-height:20px;">아이디</div>
<div class="t" style="left:712px;top:338px;line-height:20px;">정규직</div>
<div class="t" style="left:432px;top:361px;line-height:20px;">영문이름</div>
<div class="t" style="left:712px;top:361px;line-height:20px;">영문면허번호</div>
<div class="t" style="left:432px;top:384px;line-height:20px;">우편번호</div>
<div class="t" style="left:712px;top:384px;line-height:20px;">사용자구분</div>
<div class="t" style="left:432px;top:418px;line-height:20px;">주소</div>
<div class="t" style="left:432px;top:453px;line-height:20px;">전문의자격</div>
<div class="t" style="left:432px;top:501px;line-height:20px;font-family:'Liberation Mono',monospace;font-size:12px;letter-spacing:-1.2px;word-spacing:0">PACS User ID</div>
<div class="t" style="left:712px;top:501px;line-height:20px;font-family:'Liberation Mono',monospace;font-size:12px;letter-spacing:-1.2px;word-spacing:0">PACS User PW</div>
<div class="t" style="left:432px;top:522px;line-height:20px;">옵션</div>
<div class="t" style="left:533px;top:177px;line-height:20px;">박닉스</div>
<div class="t" style="left:809px;top:177px;line-height:20px;letter-spacing:0.4px">000000-0******</div>
<div class="t" style="left:533px;top:200px;line-height:20px;">소아청소년과</div>
<div class="t" style="left:813px;top:200px;line-height:20px;">소아청소년과</div>
<div class="t" style="left:533px;top:246px;line-height:20px;">2023-12-27</div>
<div class="t" style="left:813px;top:246px;line-height:20px;color:#b0b0b0">2023-12-27</div>
<div class="t" style="left:813px;top:269px;line-height:20px;">00000</div>
<div class="t" style="left:533px;top:269px;line-height:20px;">의사</div>
<div class="t" style="left:533px;top:338px;line-height:20px;">박닉스</div>
<svg class="ab" style="left:686px;top:208px" width="11" height="7" viewBox="0 0 11 7"><path d="M1 1L5.5 5.5L10 1" stroke="#333" fill="none" stroke-width="1.3"/></svg>
<svg class="ab" style="left:686px;top:231px" width="11" height="7" viewBox="0 0 11 7"><path d="M1 1L5.5 5.5L10 1" stroke="#333" fill="none" stroke-width="1.3"/></svg>
<svg class="ab" style="left:686px;top:277px" width="11" height="7" viewBox="0 0 11 7"><path d="M1 1L5.5 5.5L10 1" stroke="#333" fill="none" stroke-width="1.3"/></svg>
<svg class="ab" style="left:686px;top:300px" width="11" height="7" viewBox="0 0 11 7"><path d="M1 1L5.5 5.5L10 1" stroke="#333" fill="none" stroke-width="1.3"/></svg>
<svg class="ab" style="left:966px;top:208px" width="11" height="7" viewBox="0 0 11 7"><path d="M1 1L5.5 5.5L10 1" stroke="#333" fill="none" stroke-width="1.3"/></svg>
<svg class="ab" style="left:966px;top:392px" width="11" height="7" viewBox="0 0 11 7"><path d="M1 1L5.5 5.5L10 1" stroke="#333" fill="none" stroke-width="1.3"/></svg>
<div class="ab" style="left:677px;top:248px;width:19px;height:18px;border:1px solid #444;border-radius:1px;background:linear-gradient(#fff,#dfe3e8)"><div class="ab" style="left:0;top:0;width:17px;height:4px;background:#4f94dc;border-bottom:1px solid #444"></div><div class="ab" style="left:7px;top:0px;width:3px;height:3px;border-radius:50%;background:#fff"></div><div class="t" style="left:0;top:4px;width:17px;line-height:13px;text-align:center;font-size:11px;letter-spacing:0.5px;color:#222">15</div></div>
<div class="ab" style="left:922px;top:248px;width:19px;height:18px;border:1px solid #aaa;border-radius:1px;background:linear-gradient(#fff,#dfe3e8)"><div class="ab" style="left:0;top:0;width:17px;height:4px;background:#b8d4f0;border-bottom:1px solid #aaa"></div><div class="ab" style="left:7px;top:0px;width:3px;height:3px;border-radius:50%;background:#fff"></div><div class="t" style="left:0;top:4px;width:17px;line-height:13px;text-align:center;font-size:11px;letter-spacing:0.5px;color:#aaa">15</div></div>
<div style="position:absolute;left:955px;top:250px;width:14px;height:14px;border-radius:3px;background:#dcdcdc"></div>
<svg class="ab" style="left:955px;top:250px" width="14" height="14" viewBox="0 0 14 14"><path d="M3 7.2L6 10L11 4" stroke="#f4f4f4" fill="none" stroke-width="2"/></svg>
<div style="position:absolute;left:810px;top:340px;width:100px;height:18px;border:1px solid #b5b5b5;border-radius:3px;background:linear-gradient(#fafafa,#ececec)"></div>
<div style="position:absolute;left:810px;top:340px;width:50px;height:18px;border:1px solid #5a8fd0;border-radius:3px 0 0 3px;background:linear-gradient(#5f96d8,#7fb0e2)"></div>
<div class="t" style="left:831px;top:339px;line-height:20px;color:#fff;font-weight:bold;font-size:11px">Y</div>
<div class="t" style="left:881px;top:339px;line-height:20px;color:#666;font-size:11px">N</div>
<div style="position:absolute;left:582px;top:385px;width:24px;height:20px;border:1px solid #b0b0b0;border-radius:3px;background:linear-gradient(#fdfdfd,#ebebeb)"></div>
<svg class="ab" style="left:585px;top:386px" width="18" height="18" viewBox="0 0 18 18"><defs><radialGradient id="lens" cx="0.6" cy="0.35" r="0.7"><stop offset="0" stop-color="#ffffff"/><stop offset="1" stop-color="#a8d4f0"/></radialGradient></defs><line x1="10.3" y1="9.8" x2="14.2" y2="13.8" stroke="#e8961c" stroke-width="2.6" stroke-linecap="round"/><circle cx="7" cy="6.5" r="4.5" fill="url(#lens)" stroke="#8a94c4" stroke-width="1"/></svg>
<div class="ab" style="left:538px;top:457px;width:14px;height:14px;border-radius:3px;background:#dedede"></div>
<svg class="ab" style="left:538px;top:457px" width="14" height="14" viewBox="0 0 14 14"><path d="M3 7.2L6 10L11 4" stroke="#f6f6f6" fill="none" stroke-width="2"/></svg>
<div class="t" style="left:557px;top:453px;line-height:20px;">마취과초빙의</div>
<div class="ab" style="left:678px;top:457px;width:14px;height:14px;border-radius:3px;background:#dedede"></div>
<svg class="ab" style="left:678px;top:457px" width="14" height="14" viewBox="0 0 14 14"><path d="M3 7.2L6 10L11 4" stroke="#f6f6f6" fill="none" stroke-width="2"/></svg>
<div class="t" style="left:697px;top:453px;line-height:20px;">외과전문의</div>
<div class="ab" style="left:819px;top:457px;width:14px;height:14px;border-radius:3px;background:#dedede"></div>
<svg class="ab" style="left:819px;top:457px" width="14" height="14" viewBox="0 0 14 14"><path d="M3 7.2L6 10L11 4" stroke="#f6f6f6" fill="none" stroke-width="2"/></svg>
<div class="t" style="left:838px;top:453px;line-height:20px;">흉부외과전문의</div>
<div class="ab" style="left:538px;top:480px;width:14px;height:14px;border-radius:3px;background:#dedede"></div>
<svg class="ab" style="left:538px;top:480px" width="14" height="14" viewBox="0 0 14 14"><path d="M3 7.2L6 10L11 4" stroke="#f6f6f6" fill="none" stroke-width="2"/></svg>
<div class="t" style="left:557px;top:476px;line-height:20px;">영상의학과전문의</div>
<div style="position:absolute;left:675px;top:477px;width:131px;height:20px;background:#fffbc8"></div>
<div class="ab" style="left:678px;top:480px;width:14px;height:14px;border-radius:3px;background:#1b7b80"></div>
<svg class="ab" style="left:678px;top:480px" width="14" height="14" viewBox="0 0 14 14"><path d="M3 7.2L6 10L11 4" stroke="#fff" fill="none" stroke-width="2"/></svg>
<div class="t" style="left:697px;top:476px;line-height:20px;">소아청소년과전문의</div>
<div style="position:absolute;left:671px;top:474px;width:141px;height:27px;border:4px solid #e3161d;border-radius:3px"></div>
<div class="ab" style="left:644px;top:463px;width:25px;height:25px;border-radius:50%;background:#e8141c;box-shadow:1px 2px 2px rgba(0,0,0,0.35);color:#fff;font-weight:bold;font-size:14px;line-height:25px;text-align:center">5</div>
<div class="ab" style="left:538px;top:526px;width:14px;height:14px;border-radius:3px;background:#1b7b80"></div>
<svg class="ab" style="left:538px;top:526px" width="14" height="14" viewBox="0 0 14 14"><path d="M3 7.2L6 10L11 4" stroke="#fff" fill="none" stroke-width="2"/></svg>
<div class="t" style="left:557px;top:522px;line-height:20px;">검색조건 포함</div>
<div style="position:absolute;left:421px;top:551px;width:562px;height:57px;border:1px solid #aaa;border-radius:3px;background:#fff;overflow:hidden"></div>
<div style="position:absolute;left:422px;top:552px;width:560px;height:32px;background:linear-gradient(#fdfdfd,#e9e9e9);border-bottom:1px solid #b0b0b0"></div>
<div class="t" style="left:425px;top:557px;line-height:20px;">청구정보</div>
<div style="position:absolute;left:422px;top:584px;width:167px;height:23px;background:#f0f4f8"></div>
<div style="position:absolute;left:703px;top:584px;width:103px;height:23px;background:#f0f4f8"></div>
<div style="position:absolute;left:589px;top:584px;width:1px;height:23px;background:#b4b4b4"></div>
<div style="position:absolute;left:702px;top:584px;width:1px;height:23px;background:#b4b4b4"></div>
<div style="position:absolute;left:806px;top:584px;width:1px;height:23px;background:#b4b4b4"></div>
<div style="position:absolute;left:955px;top:584px;width:1px;height:23px;background:#b4b4b4"></div>
<div class="t" style="left:433px;top:585px;line-height:20px;">초음파 시행의사 면허번호</div>
<div class="t" style="left:712px;top:585px;line-height:20px;">면허종류</div>
<svg class="ab" style="left:939px;top:592px" width="11" height="7" viewBox="0 0 11 7"><path d="M1 1L5.5 5.5L10 1" stroke="#333" fill="none" stroke-width="1.3"/></svg>
<div style="position:absolute;left:959px;top:586px;width:20px;height:20px;border:1px solid #b0b0b0;border-radius:3px;background:linear-gradient(#fdfdfd,#ebebeb)"></div>
<div style="position:absolute;left:965px;top:598px;width:2px;height:2px;background:#1e3f73"></div>
<div style="position:absolute;left:972px;top:598px;width:2px;height:2px;background:#1e3f73"></div>
<div style="position:absolute;left:421px;top:614px;width:562px;height:57px;border:1px solid #aaa;border-radius:3px;background:#fff;overflow:hidden"></div>
<div style="position:absolute;left:422px;top:615px;width:560px;height:32px;background:linear-gradient(#fdfdfd,#e9e9e9);border-bottom:1px solid #b0b0b0"></div>
<div class="t" style="left:425px;top:620px;line-height:20px;">똑닥정보</div>
<div style="position:absolute;left:422px;top:647px;width:104px;height:23px;background:#f0f4f8"></div>
<div style="position:absolute;left:526px;top:647px;width:1px;height:23px;background:#b4b4b4"></div>
<div class="t" style="left:433px;top:648px;line-height:20px;">진료실</div>
<svg class="ab" style="left:967px;top:655px" width="11" height="7" viewBox="0 0 11 7"><path d="M1 1L5.5 5.5L10 1" stroke="#333" fill="none" stroke-width="1.3"/></svg>
<div style="position:absolute;left:421px;top:677px;width:562px;height:57px;border:1px solid #aaa;border-radius:3px;background:#fff;overflow:hidden"></div>
<div style="position:absolute;left:422px;top:678px;width:560px;height:32px;background:linear-gradient(#fdfdfd,#e9e9e9);border-bottom:1px solid #b0b0b0"></div>
<div class="t" style="left:425px;top:683px;line-height:20px;">마약류 의료쇼핑 방지 정보망 연계 정보</div>
<div style="position:absolute;left:422px;top:710px;width:104px;height:23px;background:#f0f4f8"></div>
<div style="position:absolute;left:526px;top:710px;width:1px;height:23px;background:#b4b4b4"></div>
<div class="t" style="left:433px;top:711px;line-height:20px;">인증키</div>
<div class="ab" style="left:422px;top:745px;width:100px;height:24px;border-radius:3px;border:1px solid #3f6190;background:linear-gradient(#7fa2cb,#4d709d);overflow:hidden"><div class="t" style="left:0;top:0;width:100%;line-height:22px;text-align:center;color:#fff;font-weight:bold;font-size:13px;letter-spacing:0.3px">패스워드 초기화</div></div>
<div class="ab" style="left:528px;top:745px;width:100px;height:24px;border-radius:3px;border:1px solid #3f6190;background:linear-gradient(#7fa2cb,#4d709d);overflow:hidden"><div class="t" style="left:0;top:0;width:100%;line-height:22px;text-align:center;color:#fff;font-weight:bold;font-size:13px;letter-spacing:0.3px">인증서 관리</div></div>
<div class="ab" style="left:634px;top:745px;width:110px;height:24px;border-radius:3px;border:1px solid #a04a62;background:linear-gradient(#cf7890,#ad4f69);overflow:hidden"><div class="t" style="left:0;top:0;width:100%;line-height:22px;text-align:center;color:#fff;font-weight:bold;font-size:13px;letter-spacing:0.3px">처방전 도장/서명</div></div>
<div class="ab" style="left:750px;top:745px;width:150px;height:24px;border-radius:3px;border:1px solid #b0b0b0;background:linear-gradient(#ffffff,#f0f0f0);overflow:hidden"><div class="t" style="left:0;top:0;width:100%;line-height:22px;text-align:center;color:#1e3f73;font-weight:bold;font-size:13px;letter-spacing:0.3px">사용자설정 일괄 가져오기</div></div>
<div class="ab" style="left:423px;top:784px;width:10px;height:10px;border-radius:2px;background:#f07a80"></div>
<svg class="ab" style="left:423px;top:784px" width="10" height="10" viewBox="0 0 10 10"><path d="M4 2.5L6.5 5L4 7.5" stroke="#fff" fill="none" stroke-width="1.3"/></svg>
<div class="t" style="left:438px;top:779px;line-height:20px;color:#fb7414;font-weight:bold;font-size:13px;letter-spacing:0.3px">로그인정보 등록이 필요합니다.</div>
<div class="ab" style="left:423px;top:809px;width:10px;height:10px;border-radius:2px;background:#f07a80"></div>
<svg class="ab" style="left:423px;top:809px" width="10" height="10" viewBox="0 0 10 10"><path d="M4 2.5L6.5 5L4 7.5" stroke="#fff" fill="none" stroke-width="1.3"/></svg>
<div class="t" style="left:438px;top:804px;line-height:20px;color:#fb7414;font-weight:bold;font-size:13px;letter-spacing:0.3px">프로그램 사용을 위한 권한설정이 필요합니다.</div>
<div class="ab" style="left:725px;top:803px;width:69px;height:24px;border:1px solid #b0b0b0;border-bottom:none;border-radius:3px 3px 0 0;background:linear-gradient(#ffffff,#f0f0f0)"><div class="t" style="left:0;top:0;width:100%;line-height:22px;text-align:center;color:#1e3f73;font-weight:bold;font-size:13px;letter-spacing:0.5px">권한설정</div></div>
<div class="ab" style="left:895px;top:76px;width:25px;height:25px;border-radius:50%;background:#e8141c;box-shadow:1px 2px 2px rgba(0,0,0,0.35);color:#fff;font-weight:bold;font-size:14px;line-height:25px;text-align:center">6</div>
</body></html>
